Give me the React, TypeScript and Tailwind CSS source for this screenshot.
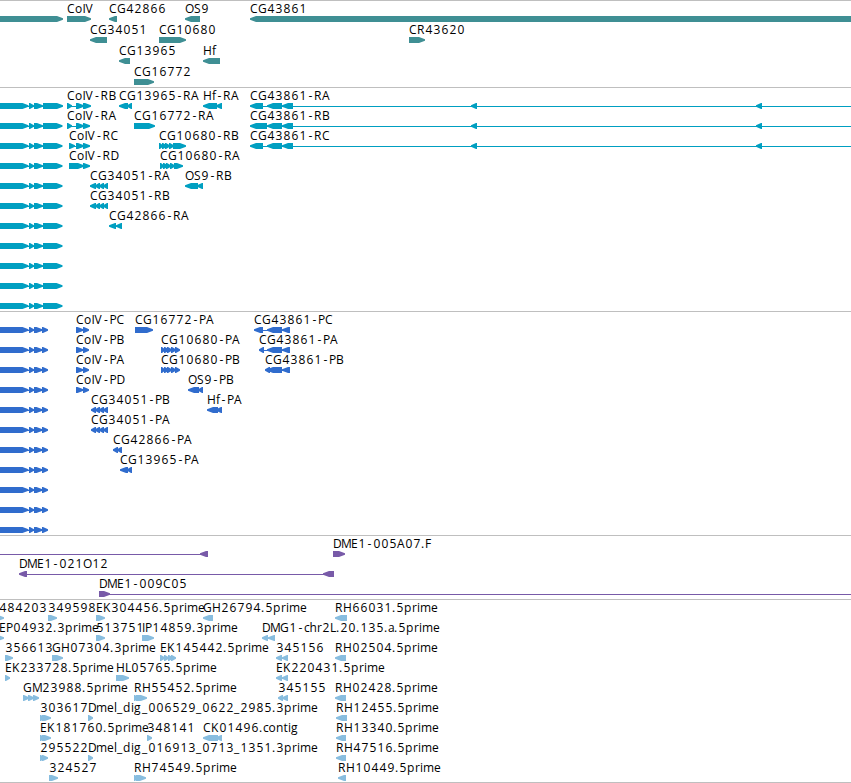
import React from 'react';

type Span = [start: number, end: number];

interface Feature {
  label?: string;
  // Label origin, when it differs from the first span
  at?: number;
  reverse?: boolean;
  spans: Span[];
  // Thin connector drawn behind the spans
  line?: Span;
}

interface Track {
  id: string;
  fill: string;
  stroke: string;
  rowClass: string;
  padClass: string;
  rows: Feature[][];
}

const fwd = (label: string | undefined, spans: Span[], line?: Span, at?: number): Feature => ({ label, spans, line, at });
const rev = (label: string | undefined, spans: Span[], line?: Span, at?: number): Feature => ({
  label,
  spans,
  line,
  at,
  reverse: true,
});

const transcript = (end = 62.5) => fwd(undefined, [[-9, 28.5], [29, 34], [34, 43], [43, end]]);
const protein = () => fwd(undefined, [[-9, 28.5], [29, 34], [34, 42.5], [42, 48]]);

const cg34051: Span[] = [[90, 96], [95, 100], [99, 104], [103, 108]];
const cg34051p: Span[] = [[91, 96], [95, 100], [99, 104], [103, 108]];
const cg10680p: Span[] = [[161, 165], [164, 169], [167, 172], [171, 176], [175, 180]];
const colP: Span[] = [[76, 83.5], [83, 89]];

const tracks: Track[] = [
  {
    id: 'genes',
    fill: 'fill-[#3f8f94]',
    stroke: 'stroke-[#3f8f94]',
    rowClass: 'h-[21px]',
    padClass: 'pb-0.5',
    rows: [
      [
        fwd(undefined, [[-9, 63]]),
        fwd('CoIV', [[67, 91]]),
        rev('CG42866', [[109, 117]]),
        rev('OS9', [[185, 200]]),
        rev('CG43861', [[250, 870]]),
      ],
      [rev('CG34051', [[90, 107]]), fwd('CG10680', [[159, 186]]), fwd('CR43620', [[409, 425]])],
      [rev('CG13965', [[119, 130]]), rev('Hf', [[203, 220]])],
      [fwd('CG16772', [[134, 154]])],
    ],
  },
  {
    id: 'transcripts',
    fill: 'fill-[#009fc1]',
    stroke: 'stroke-[#009fc1]',
    rowClass: 'h-5',
    padClass: 'pb-[3px]',
    rows: [
      [
        transcript(63),
        fwd('CoIV-RB', [[67, 72], [76, 84], [83, 91]]),
        rev('CG13965-RA', [[119, 128], [127, 132]]),
        rev('Hf-RA', [[203, 217], [216, 222]]),
        rev('CG43861-RA', [[250, 263], [267, 282], [282, 293], [471, 477], [756, 762]], [252, 851]),
      ],
      [
        transcript(),
        fwd('CoIV-RA', [[67, 72], [76, 84], [83, 90]]),
        fwd('CG16772-RA', [[134, 155]]),
        rev('CG43861-RB', [[250, 267], [267, 282], [282, 293], [471, 477], [756, 762]], [252, 851]),
      ],
      [
        transcript(),
        fwd('CoIV-RC', [[69, 75], [76, 84], [83, 90]]),
        fwd('CG10680-RB', [[159, 163], [162, 167], [165, 170], [169, 174], [173, 186]]),
        rev('CG43861-RC', [[250, 263], [267, 282], [282, 293], [471, 477], [756, 762]], [252, 851]),
      ],
      [
        transcript(),
        fwd('CoIV-RD', [[69, 84], [83, 90]]),
        fwd('CG10680-RA', [[160, 164], [163, 168], [166, 171], [170, 175], [174, 183]]),
      ],
      [transcript(), rev('CG34051-RA', cg34051), rev('OS9-RB', [[185, 198], [197, 203]])],
      [transcript(), rev('CG34051-RB', cg34051)],
      [transcript(), rev('CG42866-RA', [[109, 116], [116, 122]])],
      [transcript()],
      [transcript()],
      [transcript()],
      [transcript()],
    ],
  },
  {
    id: 'proteins',
    fill: 'fill-[#306ccd]',
    stroke: 'stroke-[#306ccd]',
    rowClass: 'h-5',
    padClass: 'pb-[3px]',
    rows: [
      [
        protein(),
        fwd('CoIV-PC', colP),
        fwd('CG16772-PA', [[135, 153]]),
        rev('CG43861-PC', [[254, 263], [267, 282], [282, 290]]),
      ],
      [
        protein(),
        fwd('CoIV-PB', colP),
        fwd('CG10680-PA', cg10680p),
        rev('CG43861-PA', [[259, 264], [267, 282], [282, 290]]),
      ],
      [
        protein(),
        fwd('CoIV-PA', colP),
        fwd('CG10680-PB', cg10680p),
        rev('CG43861-PB', [[265, 270], [267, 282], [282, 290]]),
      ],
      [protein(), fwd('CoIV-PD', colP), rev('OS9-PB', [[188, 199], [198, 203]])],
      [protein(), rev('CG34051-PB', cg34051p), rev('Hf-PA', [[207, 218], [216, 222]])],
      [protein(), rev('CG34051-PA', cg34051p)],
      [protein(), rev('CG42866-PA', [[113, 118], [117, 122]])],
      [protein(), rev('CG13965-PA', [[120, 128], [127, 132]])],
      [protein()],
      [protein()],
      [protein()],
    ],
  },
  {
    id: 'clones',
    fill: 'fill-[#785aa8]',
    stroke: 'stroke-[#785aa8]',
    rowClass: 'h-5',
    padClass: 'pb-[3px]',
    rows: [
      [rev(undefined, [[200, 208]], [0, 202]), fwd('DME1-005A07.F', [[333, 345]])],
      [rev('DME1-021O12', [[19, 27], [323, 334]])],
      [fwd('DME1-009C05', [[99, 110]], [106, 851])],
    ],
  },
  {
    id: 'ests',
    fill: 'fill-[#88bddf]',
    stroke: 'stroke-[#88bddf]',
    rowClass: 'h-5',
    padClass: 'pb-0.5',
    rows: [
      [
        fwd('484203', [[-4, 4]], undefined, -1),
        fwd('349598', [[48, 57]]),
        fwd('EK304456.5prime', [[96, 105]]),
        rev('GH26794.5prime', [[203, 213]]),
        rev('RH66031.5prime', [[335, 347]]),
      ],
      [
        fwd('EP04932.3prime', [[-4, 4]], undefined, -1),
        fwd('513751', [[96, 105]]),
        fwd('IP14859.3prime', [[142, 154]]),
        rev('DMG1-chr2L.20.135.a.5prime', [[262, 268], [268, 275]]),
      ],
      [
        fwd('356613', [[5, 13]]),
        fwd('GH07304.3prime', [[52, 63]]),
        fwd('EK145442.5prime', [[160, 165], [164, 169], [168, 173], [171, 176]]),
        rev('345156', [[276, 282], [282, 288]]),
        rev('RH02504.5prime', [[335, 346]]),
      ],
      [
        fwd('EK233728.5prime', [[5, 10]]),
        fwd('HL05765.5prime', [[116, 129]]),
        rev('EK220431.5prime', [[276, 282], [282, 288]]),
      ],
      [
        fwd('GM23988.5prime', [[23, 29], [28, 34], [33, 39]]),
        fwd('RH55452.5prime', [[134, 138], [136, 147]]),
        rev('345155', [[278, 283], [282, 288]]),
        rev('RH02428.5prime', [[335, 346]]),
      ],
      [
        fwd('303617', [[40, 44], [42, 51]]),
        fwd('Dmel_dig_006529_0622_2985.3prime', [[88, 93]]),
        rev('RH12455.5prime', [[336, 347]]),
      ],
      [
        fwd('EK181760.5prime', [[40, 44], [42, 51]]),
        fwd('348141', [[147, 152]]),
        rev('CK01496.contig', [[203, 218], [216, 222]]),
        rev('RH13340.5prime', [[336, 346]]),
      ],
      [
        fwd('295522', [[40, 44], [42, 48]]),
        fwd('Dmel_dig_016913_0713_1351.3prime', [[88, 93]]),
        rev('RH47516.5prime', [[336, 346]]),
      ],
      [
        fwd('324527', [[49, 58]]),
        fwd('RH74549.5prime', [[134, 138], [136, 146]]),
        rev('RH10449.5prime', [[338, 346]]),
      ],
    ],
  },
];

// Advance widths of the label letters; digits are all 8
const advance: Record<string, number> = {
  A: 8, B: 7.5, C: 8, D: 8, E: 7, F: 7, G: 9, H: 9, I: 3, K: 8, L: 6, M: 10, O: 9, P: 7, R: 8, S: 7, V: 8,
  a: 6, c: 5.5, d: 8, e: 7, f: 4, g: 8, h: 7.5, i: 3, l: 3, m: 11, n: 7.5, o: 7.5, p: 8, r: 5, t: 4.5,
  '-': 7, '.': 4, _: 6,
};

function glyphOffsets(text: string, origin: number) {
  let x = origin;
  return [...text]
    .map((ch) => {
      // Narrow digits and the hyphen sit centred in their cell
      const at = ch === '-' ? x + 1.5 : /\d/.test(ch) ? x + 0.5 : x;
      x += advance[ch] ?? 8;
      return at;
    })
    .join(' ');
}

function arrowPoints([start, end]: Span, reverse?: boolean) {
  const head = Math.min(6, end - start - 1);
  if (reverse) {
    return `${start},17.3 ${start + head},15 ${end},15 ${end},21 ${start + head},21 ${start},18.7`;
  }
  return `${start},15 ${end - head},15 ${end},17.3 ${end},18.7 ${end - head},21 ${start},21`;
}

function FeatureGlyph({ feature, track }: { feature: Feature; track: Track }) {
  const { label, spans, reverse } = feature;
  const line = feature.line ?? [spans[0][0] + 1, spans[spans.length - 1][1] - 1];

  return (
    <g>
      <line x1={line[0]} x2={line[1]} y1={18.5} y2={18.5} className={track.stroke} />
      {spans.map((span, i) => (
        <polygon key={i} points={arrowPoints(span, reverse)} className={track.fill} />
      ))}
      {label && (
        <text x={glyphOffsets(label, feature.at ?? spans[0][0])} y={12} className="fill-black text-[12px]">
          {label}
        </text>
      )}
    </g>
  );
}

export default function App() {
  return (
    <main className="h-[783px] w-[851px] overflow-hidden bg-white font-['Open_Sans',sans-serif]">
      {tracks.map((track) => (
        <section key={track.id} className={`border-t border-[#bfbfbf] ${track.padClass}`}>
          {track.rows.map((features, row) => (
            <svg key={row} className={`block w-full overflow-visible ${track.rowClass}`}>
              {features.map((feature, i) => (
                <FeatureGlyph key={i} feature={feature} track={track} />
              ))}
            </svg>
          ))}
        </section>
      ))}
      <div className="border-t border-[#bfbfbf]" />
    </main>
  );
}
